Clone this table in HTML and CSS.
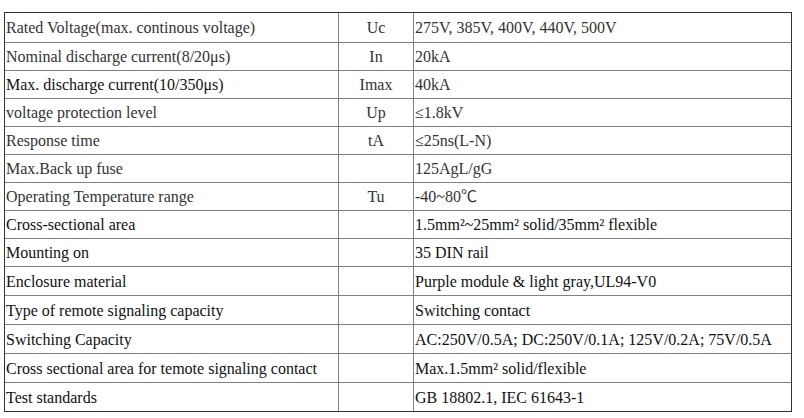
FILE: index.html
```html
<!DOCTYPE html>
<html>
<head>
<meta charset="utf-8">
<link rel="stylesheet" href="styles.css">
</head>
<body>
<div class="wrap">
<table class="spec">
<colgroup><col class="c1"><col class="c2"><col class="c3"></colgroup>
<tr class="first"><td>Rated Voltage(max. continous voltage)</td><td class="sym">Uc</td><td>275V, 385V, 400V, 440V, 500V</td></tr>
<tr><td>Nominal discharge current(8/20μs)</td><td class="sym">In</td><td>20kA</td></tr>
<tr><td class="dk">Max. discharge current(10/350μs)</td><td class="sym">Imax</td><td>40kA</td></tr>
<tr><td>voltage protection level</td><td class="sym">Up</td><td>≤1.8kV</td></tr>
<tr><td>Response time</td><td class="sym">tA</td><td>≤25ns(L-N)</td></tr>
<tr><td>Max.Back up fuse</td><td class="sym"></td><td>125AgL/gG</td></tr>
<tr><td>Operating Temperature range</td><td class="sym">Tu</td><td>-40~80℃</td></tr>
<tr><td class="dk">Cross-sectional area</td><td class="sym"></td><td class="dk">1.5mm²~25mm² solid/35mm² flexible</td></tr>
<tr><td class="dk">Mounting on</td><td class="sym"></td><td class="dk">35 DIN rail</td></tr>
<tr class="tall"><td class="dk">Enclosure material</td><td class="sym"></td><td class="dk">Purple module &amp; light gray,UL94-V0</td></tr>
<tr class="tall"><td class="dk">Type of remote signaling capacity</td><td class="sym"></td><td class="dk">Switching contact</td></tr>
<tr class="tall"><td class="dk">Switching Capacity</td><td class="sym"></td><td class="dk">AC:250V/0.5A; DC:250V/0.1A; 125V/0.2A; 75V/0.5A</td></tr>
<tr class="tall"><td class="dk">Cross sectional area for temote signaling contact</td><td class="sym"></td><td class="dk">Max.1.5mm² solid/flexible</td></tr>
<tr class="tall last"><td class="dk">Test standards</td><td class="sym"></td><td class="dk">GB 18802.1, IEC 61643-1</td></tr>
</table>
</div>
</body>
</html>
```
FILE: styles.css
```css
html, body {
  margin: 0;
  padding: 0;
  background: #ffffff;
}
.wrap {
  padding: 12px 0 0 4px;
}
.spec {
  box-sizing: border-box;
  width: 788px;
  table-layout: fixed;
  border-collapse: separate;
  border-spacing: 0;
  border: 1px solid #333333;
  font-family: "Liberation Serif", "Noto Sans CJK SC", serif;
  font-size: 16px;
  color: #333333;
}
.c1 { width: 334px; }
.c2 { width: 75px; }
.c3 { width: 377px; }
.spec td {
  box-sizing: border-box;
  padding: 1px 1px 0 1px;
  height: 28px;
  line-height: 18px;
  vertical-align: middle;
  white-space: nowrap;
  border-right: 1px solid #808080;
  border-bottom: 1px solid #808080;
}
.spec td:last-child {
  border-right: none;
}
.spec tr.first td {
  height: 30px;
}
.spec tr.tall td {
  height: 29px;
}
.spec tr.last td {
  height: 28px;
  border-bottom: none;
}
.spec td.sym {
  text-align: center;
}
.spec td.dk {
  color: #111111;
}
```
